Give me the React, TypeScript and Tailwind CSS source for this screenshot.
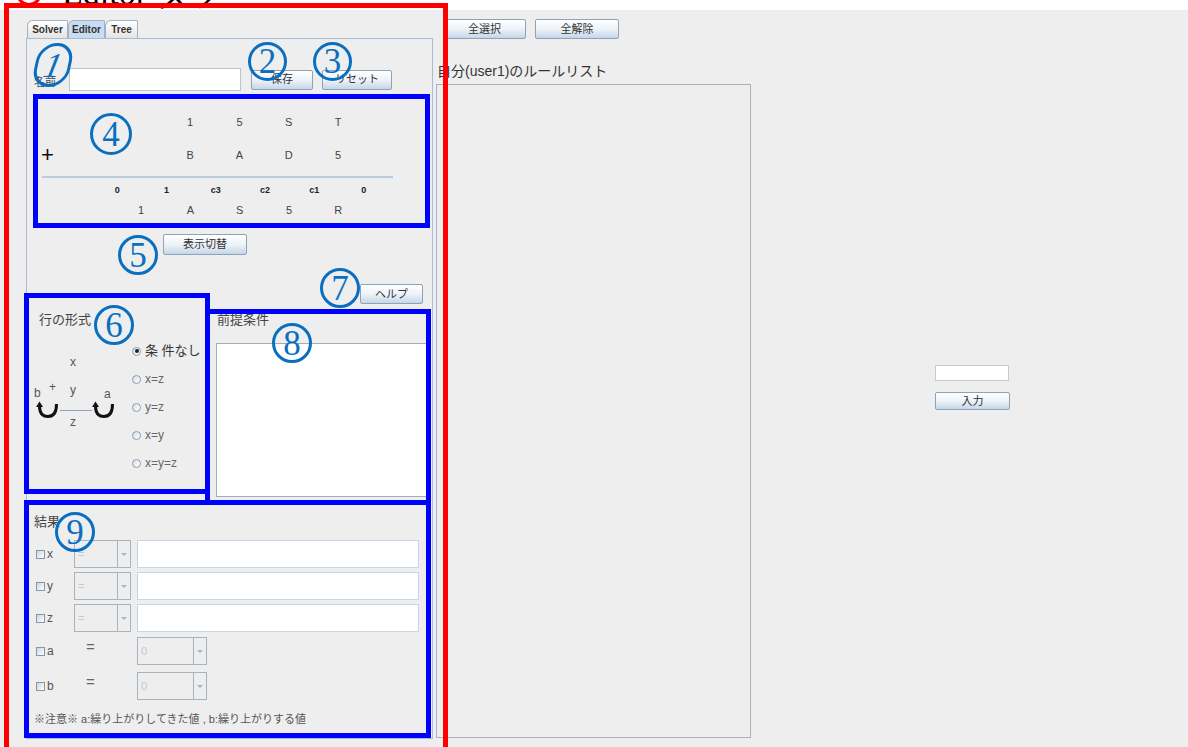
import React from "react";

const SANS = "font-['Liberation_Sans','Noto_Sans_CJK_JP',sans-serif]";
const SERIF = "font-['Liberation_Serif','DejaVu_Serif',serif]";

function Btn({ className, children }: { className: string; children: React.ReactNode }) {
  return (
    <div
      className={`flex shrink-0 items-center justify-center rounded-[2px] border border-[#8fa3b8] bg-linear-to-b from-white via-[#eef3f8] to-[#c5d6e9] text-[11px] text-[#333] ${className}`}
    >
      {children}
    </div>
  );
}

function Tab({ label, active, className }: { label: string; active?: boolean; className: string }) {
  return (
    <div
      className={`flex h-[18px] items-center justify-center rounded-tl-[6px] rounded-tr-[2px] border border-b-0 border-[#9db3c9] text-[10px] font-bold text-[#333] ${
        active ? "bg-[#c9dcf1]" : "bg-linear-to-b from-white to-[#e4e4e4]"
      } ${className}`}
    >
      {label}
    </div>
  );
}

function Radio({ checked }: { checked?: boolean }) {
  return (
    <div className="flex h-[9px] w-[9px] items-center justify-center rounded-full border border-[#8e9cab] bg-linear-to-br from-[#d7dfe8] to-white">
      {checked && <div className="h-[4px] w-[4px] rounded-full bg-[#222]" />}
    </div>
  );
}

function Check() {
  return <div className="h-[9px] w-[9px] shrink-0 border border-[#8796a6] bg-linear-to-br from-[#cdd6e0] to-white" />;
}

function Combo({ className, value }: { className: string; value: string }) {
  return (
    <div className={`flex h-[28px] shrink-0 border border-[#a7b3bf] bg-[#eeeeee] ${className}`}>
      <div className="flex flex-1 items-center pl-[3px] text-[11px] text-[#bccbda]">{value}</div>
      <div className="flex w-[13px] items-center justify-center border-l border-[#a7b3bf]">
        <div className="h-0 w-0 border-t-[3px] border-r-[3px] border-l-[3px] border-t-[#9db6cf] border-r-transparent border-l-transparent" />
      </div>
    </div>
  );
}

function Mark({ n, className }: { n: string; className: string }) {
  return (
    <div
      className={`pointer-events-none absolute flex items-center justify-center rounded-full border-[3px] border-[#0a6fc0] text-[#0a6fc0] ${SERIF} ${className}`}
    >
      <span className="text-[35px] leading-none">{n}</span>
    </div>
  );
}

const ROW1 = ["1", "5", "S", "T"];
const ROW2 = ["B", "A", "D", "5"];
const CARRY = ["0", "1", "c3", "c2", "c1", "0"];
const RESULT = ["1", "A", "S", "5", "R"];

function Cells({ items, bold }: { items: string[]; bold?: boolean }) {
  return (
    <>
      {items.map((t, i) => (
        <div key={i} className={`w-[49.3px] shrink-0 text-center ${bold ? "text-[9px] font-bold text-[#222]" : "text-[11px] text-[#444]"}`}>
          {t}
        </div>
      ))}
    </>
  );
}

function ArcIcon() {
  return (
    <svg width="24" height="18" viewBox="0 0 24 18" className="shrink-0">
      <path d="M3.5 5 Q3.5 15.5 12 15.5 Q20.5 15.5 20.5 3" fill="none" stroke="#111" strokeWidth="3" />
      <path d="M0 6 L3.5 0.5 L7 6 Z" fill="#111" />
    </svg>
  );
}

function RowFormat() {
  const opts = ["x=z", "y=z", "x=y", "x=y=z"];
  return (
    <div className="flex w-[180px] flex-col">
      <div className="mt-[9px] h-[14px] pl-[12px] text-[13px] leading-[14px] text-[#444]">行の形式</div>
      <div className="mt-[10px] flex">
        {/* addition diagram: b + a with carries */}
        <div className="relative h-[100px] w-[104px] text-[12px] text-[#555]">
          <span className="absolute top-[16px] left-[43px]">x</span>
          <span className="absolute top-[47px] left-[7px]">b</span>
          <span className="absolute top-[41px] left-[22px]">+</span>
          <span className="absolute top-[44px] left-[43px]">y</span>
          <span className="absolute top-[48px] left-[77px]">a</span>
          <span className="absolute top-[76px] left-[43px]">z</span>
          <div className="absolute top-[64px] left-[9px] flex items-center">
            <ArcIcon />
            <div className="h-px w-[32px] bg-[#8ea6c4]" />
            <ArcIcon />
          </div>
        </div>
        <div className="flex flex-col">
          <div className="flex h-[28px] items-center gap-[4px] pl-[1px]">
            <Radio checked />
            <span className="text-[13px] text-[#333]">条 件なし</span>
          </div>
          {opts.map((o) => (
            <div key={o} className="flex h-[28px] items-center gap-[4px] pl-[1px]">
              <Radio />
              <span className="text-[12px] text-[#666]">{o}</span>
            </div>
          ))}
        </div>
      </div>
    </div>
  );
}

function Precondition() {
  return (
    <div className="flex flex-1 flex-col">
      <div className="mt-[9px] h-[14px] pl-[10px] text-[13px] leading-[14px] text-[#444]">前提条件</div>
      <div className="mt-[16px] ml-[9px] h-[154px] w-[212px] border border-[#a3adb9] bg-white" />
    </div>
  );
}

function Results() {
  const wide = ["x", "y", "z"];
  return (
    <div className="flex h-[235px] flex-col">
      <div className="mt-[12px] h-[14px] pl-[7px] text-[13px] leading-[14px] text-[#444]">結果</div>
      <div className="mt-[11px] flex flex-col gap-[4px]">
        {wide.map((v) => (
          <div key={v} className="flex h-[28px] items-center">
            <div className="flex w-[47px] items-center gap-[2px] pl-[9px]">
              <Check />
              <span className="text-[12px] text-[#555]">{v}</span>
            </div>
            <Combo className="w-[57px]" value="=" />
            <div className="ml-[6px] h-[28px] w-[282px] border border-[#c5d5e5] bg-white" />
          </div>
        ))}
      </div>
      <div className="mt-[5px] flex flex-col gap-[7px]">
        {["a", "b"].map((v) => (
          <div key={v} className="flex h-[28px] items-center">
            <div className="flex w-[59px] items-center gap-[2px] pl-[9px]">
              <Check />
              <span className="text-[12px] text-[#555]">{v}</span>
            </div>
            <div className="mb-[8px] w-[51px] text-[15px] text-[#666]">=</div>
            <Combo className="w-[70px]" value="0" />
          </div>
        ))}
      </div>
      <div className="mt-[12px] h-[14px] pl-[7px] text-[11px] leading-[14px] text-[#555]">
        ※注意※ a:繰り上がりしてきた値 , b:繰り上がりする値
      </div>
    </div>
  );
}

function EditorPanel() {
  return (
    <div className="flex w-[436px] shrink-0 flex-col pt-[10px] pl-[26px]">
      <div className="flex pl-[1px]">
        <Tab label="Solver" className="w-[41px]" />
        <Tab label="Editor" active className="w-[37px]" />
        <Tab label="Tree" className="w-[33px]" />
      </div>
      <div className="flex h-[701px] w-[407px] flex-col border border-[#a6bcd3]">
        <div className="mt-[29px] flex h-[23px] items-center">
          <div className="w-[42px] pt-[6px] pl-[7px] text-[11px] text-[#444]">名前</div>
          <div className="h-[23px] w-[172px] border border-[#b8c4d0] bg-white" />
          <Btn className="ml-[10px] h-[20px] w-[62px]">保存</Btn>
          <Btn className="ml-[9px] h-[20px] w-[70px]">リセット</Btn>
        </div>

        {/* column addition */}
        <div className="mt-[21px] flex h-[20px] items-center">
          <div className="w-[138.5px] shrink-0" />
          <Cells items={ROW1} />
        </div>
        <div className="mt-[13px] flex h-[20px] items-center">
          <div className="w-[138.5px] shrink-0 pl-[14px] text-[22px] leading-none text-[#111]">+</div>
          <Cells items={ROW2} />
        </div>
        <div className="mt-[11px] ml-[15px] h-[2px] w-[351px] bg-[#b9cde1]" />
        <div className="mt-[6px] flex h-[14px] items-center">
          <div className="w-[65.5px] shrink-0" />
          <Cells items={CARRY} bold />
        </div>
        <div className="mt-[4px] flex h-[16px] items-center">
          <div className="w-[89.5px] shrink-0" />
          <Cells items={RESULT} />
        </div>

        <Btn className="mt-[16px] ml-[136px] h-[21px] w-[84px]">表示切替</Btn>
        <Btn className="mt-[29px] ml-[333px] h-[20px] w-[63px]">ヘルプ</Btn>

        <div className="flex h-[199px]">
          <RowFormat />
          <Precondition />
        </div>
        <Results />
      </div>
    </div>
  );
}

function RightArea() {
  return (
    <div className="flex">
      <div className="flex w-[316px] flex-col">
        <div className="mt-[9px] flex">
          <Btn className="ml-[7px] h-[20px] w-[83px]">全選択</Btn>
          <Btn className="ml-[9px] h-[20px] w-[84px]">全解除</Btn>
        </div>
        <div className="mt-[22px] h-[20px] pl-[1px] text-[14px] leading-[20px] text-[#333]">自分(user1)のルールリスト</div>
        <div className="mt-[3px] h-[654px] w-[315px] border border-[#a9b1bc] bg-[#eeeeee]" />
      </div>
      <div className="flex flex-col pt-[355px] pl-[183px]">
        <div className="h-[16px] w-[74px] border border-[#c3cbd3] bg-white" />
        <Btn className="mt-[11px] h-[18px] w-[75px] text-[10px]">入力</Btn>
      </div>
    </div>
  );
}

export default function App() {
  return (
    <div className={`relative h-[747px] w-[1188px] overflow-hidden bg-white ${SANS}`}>
      <div className="h-[10px] bg-white" />
      <div className="flex h-[737px] bg-[#eeeeee]">
        <EditorPanel />
        <RightArea />
      </div>

      {/* caption above the screen, cut at the top edge */}
      <div className="pointer-events-none absolute top-[-20px] left-[16px] h-[26px] w-[26px] rounded-full border-[3px] border-[#ff0000]" />
      <div className={`pointer-events-none absolute top-[-24px] left-[62px] text-[34px] leading-[34px] text-black ${SERIF}`}>
        Editor タブ
      </div>

      {/* callout frames */}
      <div className="pointer-events-none absolute top-[94px] left-[33px] h-[134px] w-[397px] border-[5px] border-[#0000ff]" />
      <div className="pointer-events-none absolute top-[293px] left-[24px] h-[201px] w-[186px] border-[5px] border-[#0000ff]" />
      <div className="pointer-events-none absolute top-[309px] left-[205px] h-[196px] w-[226px] border-[5px] border-[#0000ff]" />
      <div className="pointer-events-none absolute top-[500px] left-[24px] h-[238px] w-[407px] border-[5px] border-[#0000ff]" />

      <Mark n="1" className="top-[43px] left-[35px] h-[44px] w-[36px] -skew-x-12 italic" />
      <Mark n="2" className="top-[42px] left-[248px] h-[39px] w-[39px]" />
      <Mark n="3" className="top-[42px] left-[313px] h-[39px] w-[39px]" />
      <Mark n="4" className="top-[113px] left-[90px] h-[42px] w-[42px]" />
      <Mark n="5" className="top-[235px] left-[118px] h-[40px] w-[40px]" />
      <Mark n="6" className="top-[305px] left-[94px] h-[40px] w-[40px]" />
      <Mark n="7" className="top-[268px] left-[320px] h-[40px] w-[40px]" />
      <Mark n="8" className="top-[323px] left-[272px] h-[40px] w-[40px]" />
      <Mark n="9" className="top-[512px] left-[55px] h-[40px] w-[40px]" />

      <div className="pointer-events-none absolute top-[3px] left-[4px] h-[760px] w-[444px] border-[5px] border-[#ff0000]" />
    </div>
  );
}
